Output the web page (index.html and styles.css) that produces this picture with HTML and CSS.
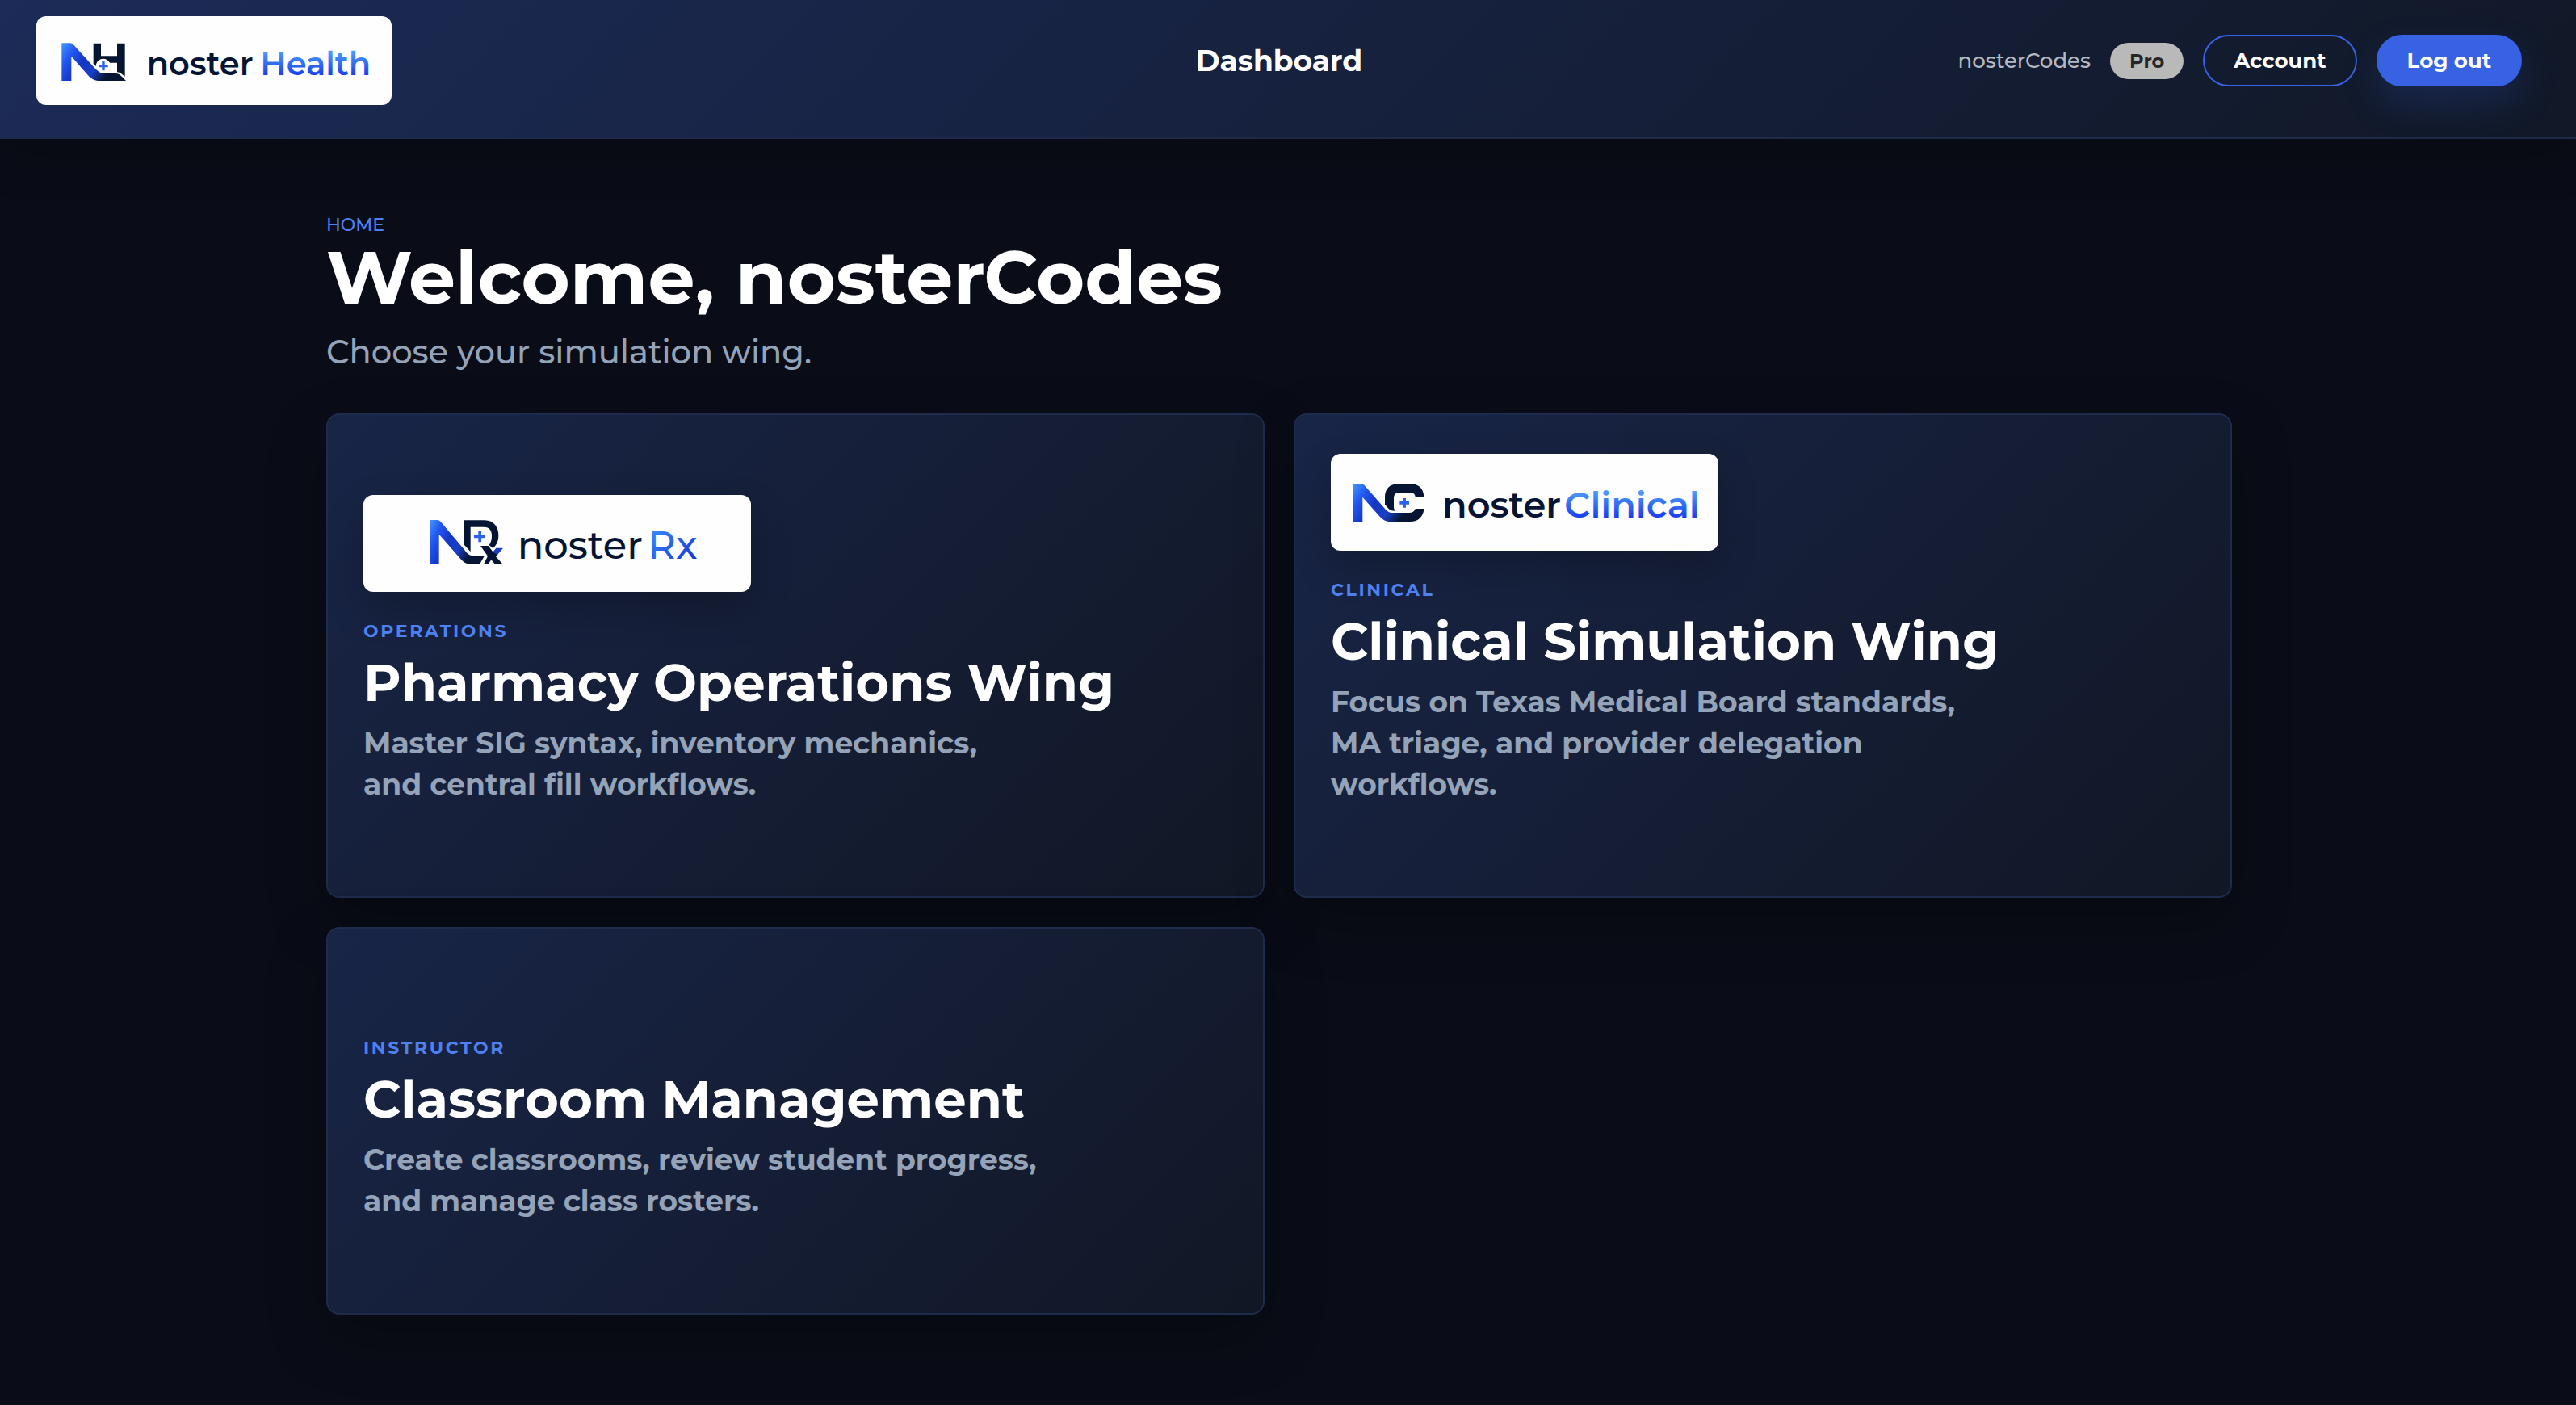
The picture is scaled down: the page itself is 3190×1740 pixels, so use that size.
FILE: index.html
```html
<!DOCTYPE html>
<html lang="en">
<head>
  <meta charset="UTF-8">
  <meta name="viewport" content="width=device-width, initial-scale=1">
  <title>Dashboard</title>
  <link rel="stylesheet" href="styles.css">
</head>
<body>

  <header class="topbar">
    <a class="brand" href="#" aria-label="nosterHealth">
      <svg class="logo" viewBox="0 0 1320 330">
        <defs>
          <linearGradient id="markFill" x1="0" y1="0" x2="1" y2="0.4">
            <stop offset="0" stop-color="#4597ff"/>
            <stop offset="0.22" stop-color="#2257f2"/>
            <stop offset="0.45" stop-color="#1436c4"/>
            <stop offset="0.68" stop-color="#1a3fc4"/>
            <stop offset="0.9" stop-color="#051433"/>
          </linearGradient>
          <linearGradient id="wordFill" x1="0" y1="0" x2="0" y2="1">
            <stop offset="0.2" stop-color="#4a9dfc"/>
            <stop offset="0.8" stop-color="#1a3fec"/>
          </linearGradient>
          <linearGradient id="rxFill" x1="0" y1="0" x2="1" y2="1">
            <stop offset="0.1" stop-color="#3b8bfb"/>
            <stop offset="0.9" stop-color="#1437d6"/>
          </linearGradient>
        </defs>
        <path fill="url(#markFill)" d="M94 100H126Q132 100 137 105L214 190Q232 211 248 213H295C310 213 318 225 333 240H235C215 240 204 232 194 222L130 149V240H94Z"/>
        <path fill="#051433" d="M212 101H240V148H300V101H329V225C318 215 312 209 300 208V173H273C267 163 258 158 249 158C232 158 222 170 221 186L212 176Z"/>
        <path fill="#2b62f0" d="M244 168H254V180H266V190H254V202H244V190H232V180H244Z"/>
        <text class="word word-small" x="410" y="219">noster</text>
        <text class="word word-small word-blue" x="832" y="219">Health</text>
      </svg>
    </a>
    <h2 class="topbar-title">Dashboard</h2>
    <nav class="topbar-actions">
      <span class="user-name">nosterCodes</span>
      <span class="badge">Pro</span>
      <button class="btn btn-outline" type="button">Account</button>
      <button class="btn btn-primary" type="button">Log out</button>
    </nav>
  </header>

  <main class="container">
    <p class="crumb">HOME</p>
    <h1>Welcome, nosterCodes</h1>
    <p class="subtitle">Choose your simulation wing.</p>

    <div class="wings">
      <!-- Pharmacy -->
      <a class="card" href="#">
        <span class="card-logo">
          <svg class="logo" viewBox="0 0 1440 360">
            <path fill="url(#markFill)" d="M246 93H275Q282 93 287 99L375 203Q388 223 404 226H450L432 257H400C383 257 374 251 364 241L281 146V257H246Z"/>
            <path fill="#051433" d="M373 94H450C486 94 502 122 502 150C502 171 495 186 481 198L467 186C475 176 477 165 477 150C477 131 466 119 450 119H398V211L373 184Z"/>
            <path fill="#2b62f0" d="M427 134H438V149H453V160H438V175H427V160H411V149H427Z"/>
            <path fill="#1a3fc4" d="M493 197H519L495 226L480 213Z"/>
            <path fill="#051433" d="M435 189H464L482 212L498 222L492 229L518 257H489L475 241L463 257H447L462 227Z"/>
            <text class="word word-light" x="572" y="236">noster</text>
            <text class="word word-light word-rx" x="1056" y="236">Rx</text>
          </svg>
        </span>
        <span class="eyebrow">OPERATIONS</span>
        <span class="card-title">Pharmacy Operations Wing</span>
        <span class="card-text">Master SIG syntax, inventory mechanics,<br>and central fill workflows.</span>
      </a>

      <!-- Clinical -->
      <a class="card" href="#">
        <span class="card-logo">
          <svg class="logo" viewBox="0 0 1440 360">
            <path fill="#051433" d="M346 159C344 127 324 112 298 112H250C218 112 201 132 201 160V188L214 203Q222 212 238 212Q234 205 234 198V165Q234 144 254 144H296Q312 146 314 159Z"/>
            <path fill="url(#markFill)" d="M83 112H113Q120 112 125 117L199 202Q211 218 225 219H290Q310 219 314 204H346C344 235 324 252 296 252H222C202 252 192 244 182 233L118 161V252H83Z"/>
            <path fill="#2b62f0" d="M268 165H279V177H291V188H279V200H268V188H256V177H268Z"/>
            <text class="word" x="414" y="236">noster</text>
            <text class="word word-blue" x="868" y="236">Clinical</text>
          </svg>
        </span>
        <span class="eyebrow">CLINICAL</span>
        <span class="card-title">Clinical Simulation Wing</span>
        <span class="card-text">Focus on Texas Medical Board standards,<br>MA triage, and provider delegation<br>workflows.</span>
      </a>

      <!-- Instructor -->
      <a class="card" href="#">
        <span class="eyebrow">INSTRUCTOR</span>
        <span class="card-title">Classroom Management</span>
        <span class="card-text">Create classrooms, review student progress,<br>and manage class rosters.</span>
      </a>
    </div>
  </main>

</body>
</html>
```
FILE: styles.css
```css
* {
  box-sizing: border-box;
}

body {
  margin: 0;
  min-height: 100vh;
  font-family: Montserrat, Inter, sans-serif;
  background: #0a0d17;
  color: #fff;
}

h1, h2, p {
  margin: 0;
}

/* Top bar */
.topbar {
  display: grid;
  grid-template-columns: 1fr auto 1fr;
  align-items: center;
  padding: 20px 67px 40px 45px;
  background: linear-gradient(135deg, #1c2b57, #111827);
  border-bottom: 2px solid #1f2a48;
  box-shadow: 0 20px 60px rgba(0, 0, 0, 0.2);
}

.brand {
  width: 440px;
  height: 110px;
  border-radius: 12px;
  background: #fefefe;
  overflow: hidden;
}

.logo {
  display: block;
  width: 100%;
  height: 100%;
}

.word {
  font-size: 134px;
  font-weight: 600;
  fill: #051433;
}

.word-small {
  font-size: 120px;
}

.word-light {
  font-size: 144px;
  font-weight: 500;
}

.word-blue {
  fill: url(#wordFill);
}

.word-rx {
  fill: url(#rxFill);
}

.topbar-title {
  font-size: 36px;
  line-height: 48px;
  font-weight: 700;
}

.topbar-actions {
  display: flex;
  align-items: center;
  justify-content: flex-end;
  gap: 24px;
}

.user-name {
  font-size: 26px;
  font-weight: 500;
  color: #b4b8c1;
}

.badge {
  padding: 0 24px;
  border-radius: 23px;
  background: #b9b9b9;
  color: #262626;
  font-size: 24px;
  line-height: 45px;
  font-weight: 700;
}

.btn {
  height: 64px;
  padding: 0 36px;
  border: 2px solid #3662e3;
  border-radius: 32px;
  font-family: inherit;
  font-size: 26px;
  font-weight: 700;
  color: #fff;
  cursor: pointer;
}

.btn-outline {
  background: transparent;
}

.btn-primary {
  background: #3662e3;
  box-shadow: 0 20px 48px rgba(54, 98, 227, 0.2);
}

/* Content */
.container {
  max-width: 2382px;
  margin: 0 auto;
  padding: 92px 22px 92px 0;
}

.crumb {
  font-size: 22px;
  line-height: 30px;
  font-weight: 500;
  color: #4f80f0;
}

h1 {
  font-size: 92px;
  line-height: 98px;
  font-weight: 700;
}

.subtitle {
  margin-top: 16px;
  font-size: 40px;
  line-height: 56px;
  font-weight: 500;
  color: #94a3b8;
}

.wings {
  display: grid;
  grid-template-columns: repeat(2, 1fr);
  gap: 36px;
  margin-top: 48px;
}

.card {
  display: flex;
  flex-direction: column;
  align-items: flex-start;
  justify-content: flex-end;
  min-height: 480px;
  padding: 48px 44px 113px;
  border: 2px solid #1f2b4a;
  border-radius: 16px;
  background: linear-gradient(135deg, #182547, #121725);
  box-shadow: 0 28px 72px rgba(0, 0, 0, 0.28);
  color: #fff;
  text-decoration: none;
}

.card-logo {
  width: 480px;
  height: 120px;
  margin-bottom: 34px;
  border-radius: 12px;
  background: #fefefe;
  box-shadow: 0 20px 48px rgba(0, 0, 0, 0.22);
  overflow: hidden;
}

.eyebrow {
  font-size: 22px;
  line-height: 30px;
  font-weight: 700;
  letter-spacing: 0.12em;
  color: #4f80f0;
}

.card-title {
  margin: 12px 0 14px;
  font-size: 64px;
  line-height: 72px;
  font-weight: 700;
}

.card-text {
  font-size: 36px;
  line-height: 51px;
  font-weight: 700;
  color: #94a3b8;
}
```
